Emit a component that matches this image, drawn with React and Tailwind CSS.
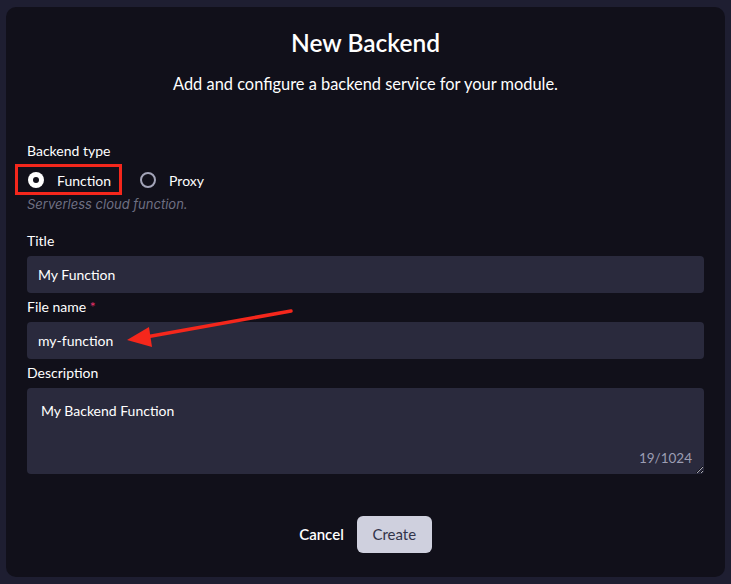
import { useState } from 'react'

function Radio({ checked, label, onClick }) {
  return (
    <button type="button" onClick={onClick} className="flex items-center gap-[13px] h-[30px]">
      {checked ? (
        <span className="w-4 h-4 rounded-full bg-white flex items-center justify-center">
          <span className="w-[6px] h-[6px] rounded-full bg-[#11101a]" />
        </span>
      ) : (
        <span className="w-4 h-4 rounded-full border-2 border-[#a3a4b8]" />
      )}
      <span className="text-[14px] text-white">{label}</span>
    </button>
  )
}

export default function App() {
  const [type, setType] = useState('function')
  const [desc, setDesc] = useState('My Backend Function')

  return (
    <div className="w-[731px] h-[584px] bg-[#1e1e31] p-[6px] pb-[7px] pt-[7px] font-['Lato',sans-serif]">
      <div className="relative h-full rounded-[10px] bg-[#11101a] px-[21px] flex flex-col">
        <h2 className="text-center text-white text-[24.5px] font-semibold mt-[21px] leading-[30px]">New Backend</h2>
        <p className="text-center text-white text-[16.4px] mt-[16px] leading-[20px]">
          Add and configure a backend service for your module.
        </p>

        <div className="mt-[48px] text-[14px] text-white leading-[18px]">Backend type</div>
        <div className="flex items-center gap-[29px] mt-[5px] ml-[1px]">
          <div className="relative">
            <Radio checked={type === 'function'} label="Function" onClick={() => setType('function')} />
            <div className="absolute -left-[13px] -top-[1px] w-[107px] h-[31px] border-[3px] border-[#f5271c] pointer-events-none" />
          </div>
          <Radio checked={type === 'proxy'} label="Proxy" onClick={() => setType('proxy')} />
        </div>
        <div className="text-[13px] italic text-[#6e6f82] font-['Inter',sans-serif] leading-[16px] mt-[1px]">
          Serverless cloud function.
        </div>

        <label className="mt-[20px] text-[14px] text-white leading-[18px]">Title</label>
        <input
          defaultValue="My Function"
          className="mt-[6px] h-[37px] rounded-[4px] bg-[#2a2a3d] px-[11px] text-[14px] text-white outline-none"
        />

        <label className="mt-[5px] text-[14px] text-white leading-[18px]">
          File name <span className="text-[#e8306a]">*</span>
        </label>
        <input
          defaultValue="my-function"
          className="mt-[6px] h-[37px] rounded-[4px] bg-[#2a2a3d] px-[11px] text-[14px] text-white outline-none"
        />

        <label className="mt-[5px] text-[14px] text-white leading-[18px]">Description</label>
        <div className="relative mt-[6px]">
          <textarea
            value={desc}
            onChange={(e) => setDesc(e.target.value)}
            className="block w-full h-[86px] rounded-[4px] bg-[#2a2a3d] px-[14px] pt-[12px] text-[14px] text-white outline-none resize-y"
          />
          <span className="absolute right-[12px] bottom-[6px] text-[13.5px] text-[#9c9db3] pointer-events-none">
            {desc.length}/1024
          </span>
        </div>

        <div className="flex justify-center items-center gap-[13px] mt-[42px]">
          <button className="text-white text-[15px] font-semibold px-0">Cancel</button>
          <button className="h-[37px] w-[75px] rounded-[6px] bg-[#cfd0de] text-[#33344a] text-[15px]">Create</button>
        </div>

        <svg className="absolute left-0 top-0 pointer-events-none" width="731" height="584" viewBox="0 0 731 584">
          <line x1="285" y1="304" x2="140" y2="330" stroke="#f5271c" strokeWidth="3.5" strokeLinecap="round" />
          <polygon points="121,333 143,320 146,340" fill="#f5271c" />
        </svg>
      </div>
    </div>
  )
}
